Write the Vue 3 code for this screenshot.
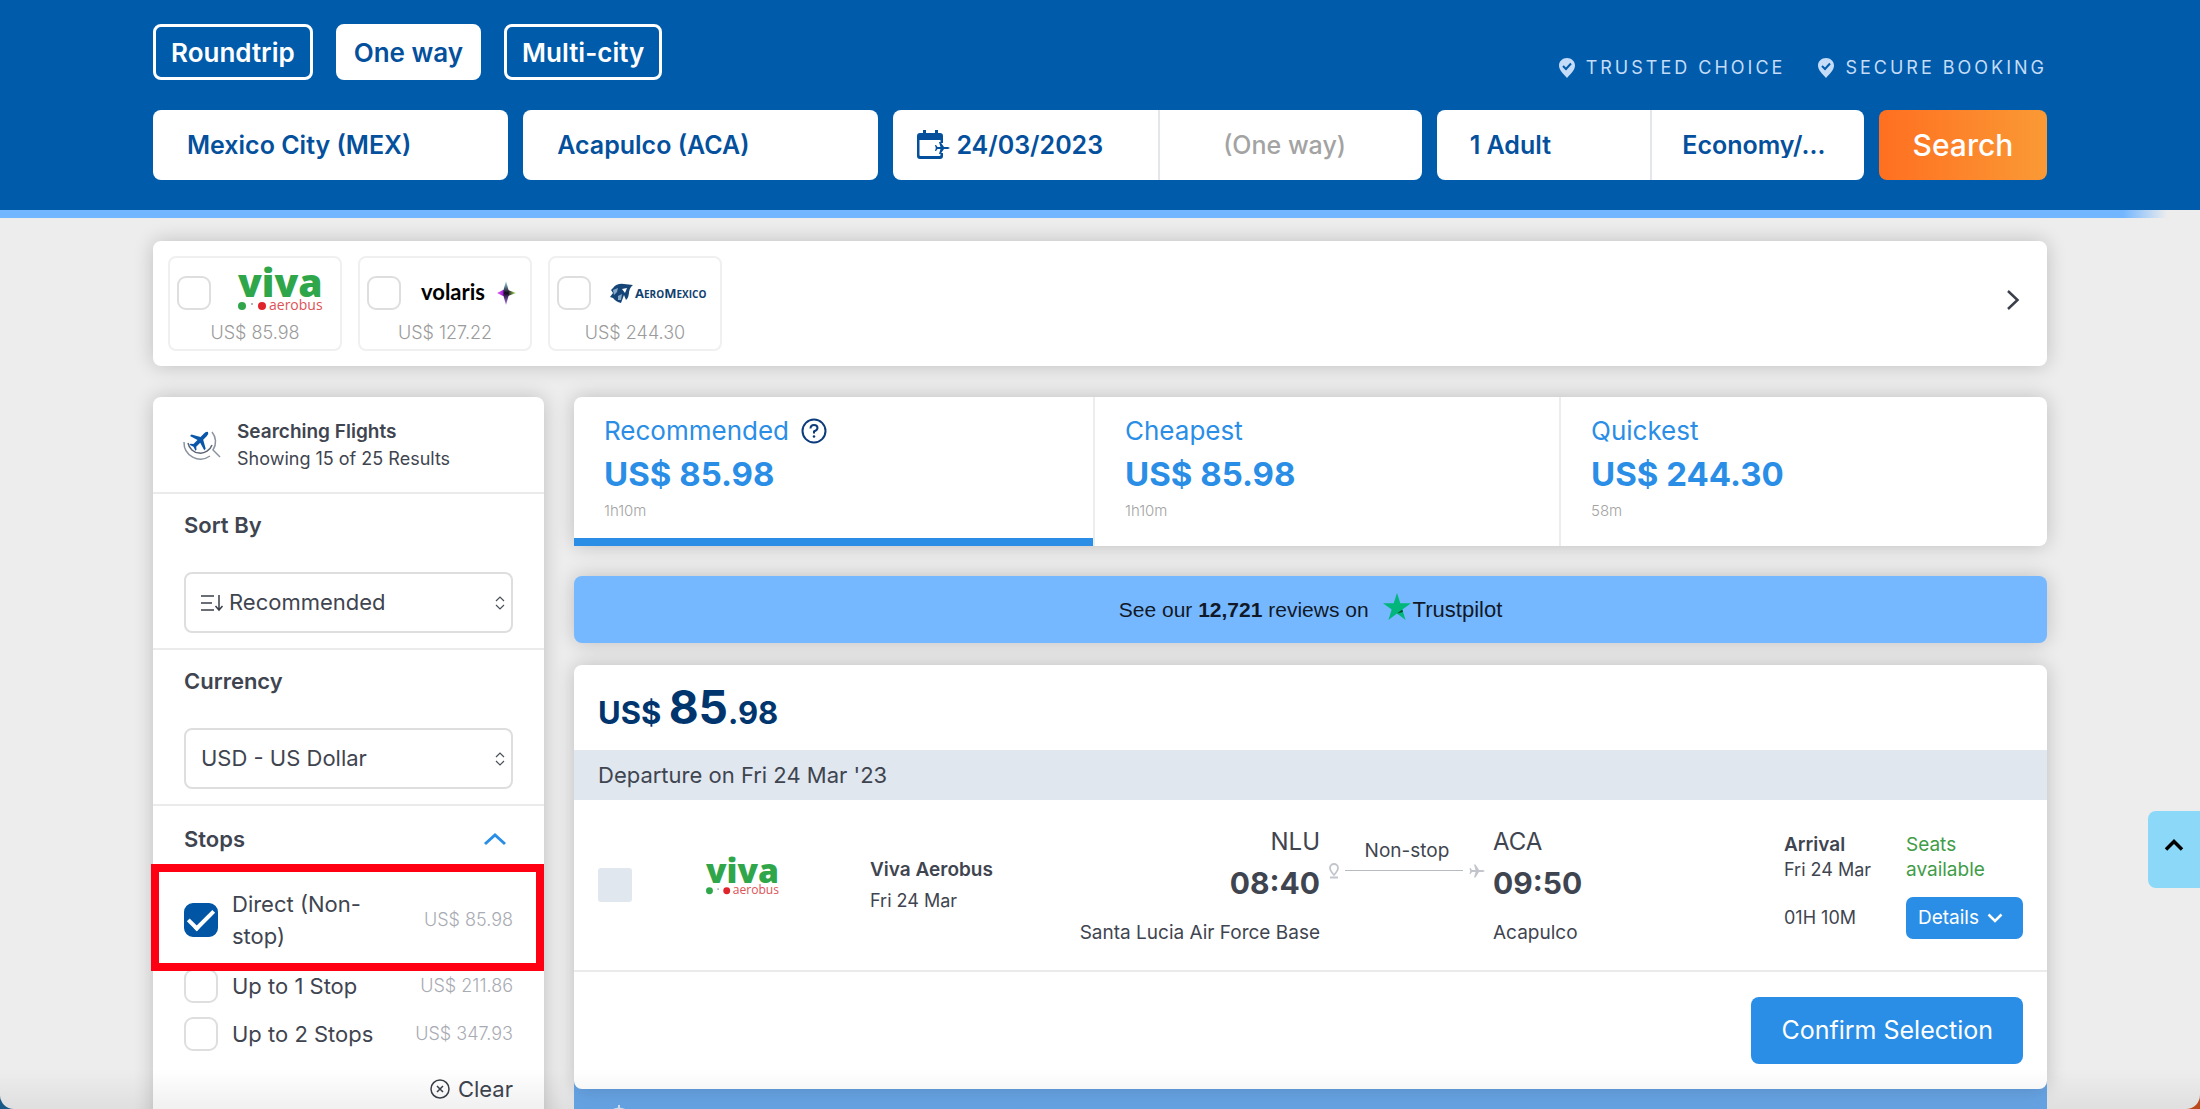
<script setup>
import { ref } from 'vue'

const tripTypes = ['Roundtrip', 'One way', 'Multi-city']
const trip = ref('One way')
const origin = ref('Mexico City (MEX)')
const destination = ref('Acapulco (ACA)')
const departDate = ref('24/03/2023')

const perks = ['TRUSTED CHOICE', 'SECURE BOOKING']

const airlines = [
  { id: 'viva',       price: 'US$ 85.98' },
  { id: 'volaris',    price: 'US$ 127.22' },
  { id: 'aeromexico', price: 'US$ 244.30' },
]

const stops = ref([
  { id: 'direct', label: 'Direct (Non-stop)', price: 'US$ 85.98',  checked: true },
  { id: 'one',    label: 'Up to 1 Stop',      price: 'US$ 211.86', checked: false },
  { id: 'two',    label: 'Up to 2 Stops',     price: 'US$ 347.93', checked: false },
])

const tabs = [
  { label: 'Recommended', price: 'US$ 85.98',  time: '1h10m', help: true },
  { label: 'Cheapest',    price: 'US$ 85.98',  time: '1h10m' },
  { label: 'Quickest',    price: 'US$ 244.30', time: '58m' },
]
const activeTab = ref('Recommended')

function clearStops() {
  stops.value.forEach(s => { s.checked = false })
}
</script>

<template>
  <div class="page">
    <header class="top">
      <div class="top-row">
        <div class="trips">
          <button v-for="t in tripTypes" :key="t" type="button" :class="['trip', { active: t === trip }]" @click="trip = t">{{ t }}</button>
        </div>
        <div class="perks">
          <span v-for="p in perks" :key="p" class="perk">
            <svg width="16" height="20" viewBox="0 0 16 20">
              <path d="M8 0 C12.5 0 16 3.3 16 7.6 C16 12 12 15.5 8 20 C4 15.5 0 12 0 7.6 C0 3.3 3.5 0 8 0 Z" fill="#c4dcf8"/>
              <path d="M4 8 L7 11 L12 5.5" fill="none" stroke="#005baa" stroke-width="2"/>
            </svg>
            {{ p }}
          </span>
        </div>
      </div>

      <form class="search" @submit.prevent>
        <input v-model="origin" class="field" aria-label="From">
        <input v-model="destination" class="field" aria-label="To">
        <div class="pair">
          <label class="half date">
            <svg width="33" height="30" viewBox="0 0 33 30">
              <path d="M6 0 h3 v3 h9 v-3 h3 v3 h2 a3 3 0 0 1 3 3 v7 h-2.500 v-3 h-21 v15 a1 1 0 0 0 1 1 h19 a1 1 0 0 0 1 -1 v-2 h2.500 v3 a3 3 0 0 1 -3 3 h-20 a3 3 0 0 1 -3 -3 v-20 a3 3 0 0 1 3 -3 h3 z" fill="#04509c"/>
              <path d="M33 18 l-2 1 h-4 l-3.500 5 h-1.500 l1.500 -5 h-3 l-1.500 2 h-1 l.8 -3 l-.8 -3 h1 l1.500 2 h3 l-1.500 -5 h1.500 l3.500 5 h4 z" fill="#04509c"/>
            </svg>
            <input v-model="departDate" aria-label="Departure date">
          </label>
          <input class="half return" placeholder="(One way)" aria-label="Return date" disabled>
        </div>
        <div class="pair">
          <select class="half" aria-label="Passengers"><option>1 Adult</option></select>
          <select class="half" aria-label="Cabin"><option>Economy/...</option></select>
        </div>
        <button class="go">Search</button>
      </form>
    </header>
    <div class="progress"></div>

    <main class="wrap">
      <section class="card airlines">
        <div v-for="a in airlines" :key="a.id" class="airline">
          <div class="airline-top">
            <input :id="a.id" type="checkbox" class="check" :aria-label="a.id">
            <label :for="a.id">
              <svg v-if="a.id === 'viva'" width="98" height="36" viewBox="-7 0 98 36">
                <text x="0" y="22" class="viva">viva</text>
                <circle cx="4" cy="31" r="4" fill="#2fa64a"/>
                <circle cx="14" cy="29" r="1" fill="#999"/>
                <circle cx="24" cy="31" r="4" fill="#e0242c"/>
                <text x="31" y="35" class="aerobus">aerobus</text>
              </svg>
              <svg v-else-if="a.id === 'volaris'" width="98" height="36" viewBox="0 0 98 36">
                <defs>
                  <linearGradient id="spark" x1="0" y1="0" x2="1" y2="0">
                    <stop offset="0" stop-color="#e06bf0"/>
                    <stop offset=".35" stop-color="#a01bd8"/>
                    <stop offset=".55" stop-color="#10081c"/>
                    <stop offset="1" stop-color="#b6f06c"/>
                  </linearGradient>
                  <linearGradient id="spark2" x1="0" y1="0" x2="0" y2="1">
                    <stop offset="0" stop-color="#a8e8f8"/>
                    <stop offset=".5" stop-color="#10081c"/>
                    <stop offset="1" stop-color="#b47cf8"/>
                  </linearGradient>
                </defs>
                <text x="0" y="25" class="volaris">volaris</text>
                <path d="M76 18 L82 15 L87 15 L95 18 L87 21 L82 21 Z" fill="url(#spark)"/>
                <path d="M85 6 L87.500 15 L87.500 21 L85 30 L82.500 21 L82.500 15 Z" fill="url(#spark2)"/>
              </svg>
              <svg v-else width="98" height="36" viewBox="0 0 98 36">
                <path d="M2 13 Q6 8 13 9 L22 10 Q19 12 18 17 Q18 22 15 25 L13 20 L10 28 Q5 27 2 23 L-1 22 L2 18 L0 15 Z" fill="#154577"/>
                <path d="M2 15 L7 13 L6 17 L3 20 Z M7 21 L11 19 L10 25 L7 25 Z" fill="#86a9c9"/>
                <path d="M11 14 L16 13 L14 18 Z" fill="#fff"/>
                <text x="24" y="23" class="aeromexico"><tspan class="cap">A</tspan>ERO<tspan class="cap">M</tspan>EXICO</text>
              </svg>
            </label>
          </div>
          <div class="airline-price">{{ a.price }}</div>
        </div>
        <button type="button" class="next" aria-label="Next">
          <svg width="14" height="22" viewBox="0 0 14 22"><path d="M2 2 L11.500 11 L2 20" fill="none" stroke="#3a3f4a" stroke-width="2.500"/></svg>
        </button>
      </section>

      <div class="columns">
        <aside class="card filters">
          <div class="status">
            <svg width="38" height="30" viewBox="0 0 38 30">
              <path d="M29 2 A15 15 0 0 1 30 20 L37 27 M1 12 A16.500 16.500 0 0 0 27 26" fill="none" stroke="#8b93a0" stroke-width="1.500"/>
              <path d="M5 13 A12.500 12.500 0 0 0 29 15" fill="none" stroke="#5c6674" stroke-width="1.500"/>
              <path d="M25 2 q-2 -1 -4 1.500 l-3.500 3.500 l-9 -2.500 l-1.500 1.500 l7.500 4 l-4 4 l-3 -.3 l-1 1 l4 2 l2 4 l1 -1 l-.3 -3 l4 -4 l4 7.500 l1.500 -1.500 l-2.500 -9 l3.500 -3.500 q2.500 -2 1.300 -4 z" fill="#0a56a8"/>
            </svg>
            <div>
              <b>Searching Flights</b>
              <p>Showing 15 of 25 Results</p>
            </div>
          </div>

          <div class="group">
            <label for="sort" class="group-title">Sort By</label>
            <div class="select-box">
              <svg width="22" height="18" viewBox="0 0 22 18">
                <path d="M0 2 H13 M0 9 H11 M0 16 H13 M18 1 V16 M14.500 12 L18 16 L21.500 12" fill="none" stroke="#3a3f4a" stroke-width="1.500"/>
              </svg>
              <select id="sort"><option>Recommended</option></select>
              <svg width="10" height="14" viewBox="0 0 10 14"><path d="M1 5 L5 1 L9 5 M1 9 L5 13 L9 9" fill="none" stroke="#4a5059" stroke-width="1.200"/></svg>
            </div>
          </div>

          <div class="group">
            <label for="currency" class="group-title">Currency</label>
            <div class="select-box">
              <select id="currency"><option>USD - US Dollar</option></select>
              <svg width="10" height="14" viewBox="0 0 10 14"><path d="M1 5 L5 1 L9 5 M1 9 L5 13 L9 9" fill="none" stroke="#4a5059" stroke-width="1.200"/></svg>
            </div>
          </div>

          <div class="stops-head">
            <span class="group-title">Stops</span>
            <button type="button" class="fold" aria-label="Collapse stops">
              <svg width="24" height="14" viewBox="0 0 24 14"><path d="M2 12 L12 3 L22 12" fill="none" stroke="#2a8ee6" stroke-width="3"/></svg>
            </button>
          </div>
          <div class="stops">
            <div v-for="s in stops" :key="s.id" :class="['stop', { marked: s.id === 'direct' }]">
              <input :id="s.id" v-model="s.checked" type="checkbox" class="check">
              <label :for="s.id">{{ s.label }}</label>
              <span class="stop-price">{{ s.price }}</span>
            </div>
          </div>
          <button type="button" class="clear" @click="clearStops">
            <svg width="20" height="20" viewBox="0 0 20 20"><circle cx="10" cy="10" r="9" fill="none" stroke="#3a3f4a" stroke-width="1.500"/><path d="M7 7 L13 13 M13 7 L7 13" stroke="#3a3f4a" stroke-width="1.500"/></svg>
            Clear
          </button>
        </aside>

        <div class="results">
          <section class="card tabs">
            <button v-for="t in tabs" :key="t.label" type="button" :class="['tab', { active: t.label === activeTab }]" @click="activeTab = t.label">
              <span class="tab-label">
                {{ t.label }}
                <svg v-if="t.help" width="26" height="26" viewBox="0 0 26 26">
                  <circle cx="13" cy="13" r="11.500" fill="none" stroke="#0d3c7c" stroke-width="2"/>
                  <path d="M9.500 10.500 Q9.500 7 13 7 Q16.500 7 16.500 10 Q16.500 12 13 13.500 V15.500" fill="none" stroke="#0d3c7c" stroke-width="2"/>
                  <circle cx="13" cy="18.500" r="1.300" fill="#0d3c7c"/>
                </svg>
              </span>
              <span class="tab-price">{{ t.price }}</span>
              <span class="tab-time">{{ t.time }}</span>
            </button>
          </section>

          <a href="#" class="card reviews">
            <span>See our <b>12,721</b> reviews on</span>
            <span class="pilot">
              <svg width="28" height="28" viewBox="0 0 28 28">
                <path d="M14 0 L17.300 10.300 H28 L19.300 16.600 L22.600 27 L14 20.600 L5.400 27 L8.700 16.600 L0 10.300 H10.700 Z" fill="#00b67a"/>
                <path d="M20 19 L19.300 16.600 L14 20.600 Z" fill="#005128"/>
              </svg>
              Trustpilot
            </span>
          </a>

          <article class="card offer">
            <div class="offer-price">US$ <strong>85</strong>.98</div>
            <div class="offer-date">Departure on Fri 24 Mar '23</div>
            <div class="flight">
              <input type="checkbox" class="pick" aria-label="Select flight" disabled>
              <svg class="carrier-logo" width="76" height="32" viewBox="0 0 88 37">
                <text x="0" y="22" class="viva">viva</text>
                <circle cx="4" cy="31" r="4" fill="#2fa64a"/>
                <circle cx="14" cy="29" r="1" fill="#999"/>
                <circle cx="24" cy="31" r="4" fill="#e0242c"/>
                <text x="31" y="35" class="aerobus">aerobus</text>
              </svg>
              <div class="carrier">
                <b>Viva Aerobus</b>
                <span>Fri 24 Mar</span>
              </div>
              <div class="place from">
                <span class="code">NLU</span>
                <b class="clock">08:40</b>
                <span class="airport">Santa Lucia Air Force Base</span>
              </div>
              <div class="leg">
                <span>Non-stop</span>
                <div class="leg-line">
                  <svg width="10" height="16" viewBox="0 0 10 16"><path d="M5 12 Q1 7.500 1 5 A4 4 0 0 1 9 5 Q9 7.500 5 12 Z M1 14.500 H9" fill="none" stroke="#c3c5cd" stroke-width="1.800"/></svg>
                  <i></i>
                  <svg width="16" height="14" viewBox="0 0 16 14"><path d="M16 7 L14 8 H10 L6.500 13.500 H5 L6.500 8 H3 L1.500 10 H.5 L1.200 7 L.5 4 H1.500 L3 6 H6.500 L5 .5 H6.500 L10 6 H14 Z" fill="#c3c5cd"/></svg>
                </div>
              </div>
              <div class="place">
                <span class="code">ACA</span>
                <b class="clock">09:50</b>
                <span class="airport">Acapulco</span>
              </div>
              <div class="arrival">
                <b>Arrival</b>
                <span>Fri 24 Mar</span>
                <span class="length">01H 10M</span>
              </div>
              <div class="seats">
                <span>Seats available</span>
                <button type="button" class="details">
                  Details
                  <svg width="16" height="10" viewBox="0 0 16 10"><path d="M1.500 1.500 L8 8 L14.500 1.500" fill="none" stroke="#fff" stroke-width="2.500"/></svg>
                </button>
              </div>
            </div>
            <div class="offer-foot">
              <button type="button" class="confirm">Confirm Selection</button>
            </div>
          </article>

          <div class="more">
            <svg width="26" height="26" viewBox="0 0 26 26"><path d="M13 0 V4 M4 7 Q13 0 22 7 V20 H4 Z" fill="none" stroke="#d6e9fd" stroke-width="2"/></svg>
          </div>
        </div>
      </div>
    </main>

    <button type="button" class="to-top" aria-label="Back to top">
      <svg width="20" height="14" viewBox="0 0 20 14"><path d="M2 11.500 L10 3.500 L18 11.500" fill="none" stroke="#000" stroke-width="3.500"/></svg>
    </button>
  </div>
</template>

<style>
body { background: linear-gradient(90deg, #1a5a88 50%, #b9491a 50%); }
</style>

<style scoped>
* { box-sizing: border-box; }

.page {
  position: relative;
  height: 100vh;
  overflow: hidden;
  background: #ededed;
  border-radius: 0 0 14px 14px;
  color: #3f4550;
  font-family: Inter, "Open Sans", sans-serif;
  font-size: 18px;
  line-height: 25px;
}
/* shade along the bottom edge of the window */
.page::after {
  content: "";
  position: absolute;
  inset: auto 0 0 0;
  height: 40px;
  background: linear-gradient(rgba(0, 0, 0, 0), rgba(0, 0, 0, 0.06));
  pointer-events: none;
}
button, input, select { font: inherit; color: inherit; margin: 0; }
button { cursor: pointer; border: 0; background: none; padding: 0; }
select { appearance: none; border: 0; background: none; padding: 0; }
svg { display: block; flex: none; overflow: visible; }
p { margin: 0; }
b { font-weight: 600; }

.top {
  background: #005baa;
  padding: 24px 153px 30px;
}
.top-row {
  display: flex;
  justify-content: space-between;
  align-items: flex-start;
}
.trips { display: flex; gap: 23px; }
.trip {
  height: 56px;
  padding: 0 15px;
  border: 3px solid #fff;
  border-radius: 8px;
  color: #fff;
  font-size: 26px;
  font-weight: 600;
}
.trip.active { background: #fff; color: #04509c; }

.perks { display: flex; gap: 33px; padding-top: 31px; }
.perk {
  display: flex;
  align-items: center;
  gap: 11px;
  color: #c4dcf8;
  font-size: 18px;
  letter-spacing: 3px;
}

.search {
  display: grid;
  grid-template-columns: 355fr 355fr 528fr 427fr 168fr;
  gap: 15px;
  margin-top: 30px;
}
.field, .pair, .go {
  height: 70px;
  min-width: 0;
  border: 0;
  border-radius: 8px;
  background: #fff;
  color: #04509c;
  font-size: 25px;
  font-weight: 600;
}
.field { padding: 0 34px; }
.pair { display: flex; }
.half {
  flex: 0 0 50%;
  min-width: 0;
  padding: 0 0 0 33px;
}
.half + .half { border: 0; border-left: 2px solid #e3e6ea; padding-left: 30px; }
.date { display: flex; align-items: center; gap: 6px; padding-left: 24px; }
.date input { width: 100%; min-width: 0; border: 0; padding: 0; background: none; }
.pair .return { padding: 0 12px 0 0; text-align: center; background: none; }
.return::placeholder { color: #a3a3a3; opacity: 1; font-weight: 500; }
.go {
  background: linear-gradient(90deg, #ff6f20, #fa9a35);
  color: #fff;
  font-size: 30px;
  font-weight: 500;
}

.progress {
  height: 8px;
  background: linear-gradient(90deg, #72b6ff 96.500%, #ededed 98.500%);
}

.wrap { padding: 23px 153px 0; }
.card {
  background: #fff;
  border-radius: 8px;
  box-shadow: 0 0 20px rgba(0, 0, 0, 0.2);
}

.airlines {
  display: flex;
  align-items: center;
  gap: 16px;
  height: 125px;
  padding: 0 27px 0 15px;
}
.airline {
  width: 174px;
  height: 95px;
  padding-top: 16px;
  border: 2px solid #f0f0f0;
  border-radius: 8px;
}
.airline-top { display: flex; align-items: center; gap: 20px; height: 38px; padding-left: 7px; }
.airline-price {
  margin-top: 8px;
  text-align: center;
  color: #9b9b9b;
  font-weight: 300;
}
.next { margin: 0 0 8px auto; }

.check {
  appearance: none;
  flex: none;
  width: 34px;
  height: 34px;
  border: 2px solid #dedede;
  border-radius: 9px;
  background: #fff;
}
.check:checked {
  border-color: #0055a5;
  background: #0055a5;
  display: grid;
  place-items: center;
}
.check:checked::after {
  content: "";
  width: 22px;
  height: 10px;
  border: solid #fff;
  border-width: 0 0 4px 4px;
  transform: translateY(-3px) rotate(-45deg);
}

.viva { font: 800 39px "Open Sans", sans-serif; fill: #2fa64a; }
.aerobus { font: 400 14px "Open Sans", sans-serif; fill: #dd5257; }
.volaris { font: 700 22px Lato, sans-serif; fill: #000; }
.aeromexico { font: 700 10px "Open Sans", sans-serif; fill: #123f70; }
.cap { font-size: 13px; }

.columns {
  display: grid;
  grid-template-columns: 391fr 1473fr;
  gap: 30px;
  margin-top: 31px;
  align-items: start;
}

.filters { padding-bottom: 60px; }
.status {
  display: flex;
  align-items: center;
  gap: 16px;
  height: 97px;
  padding-left: 30px;
  border-bottom: 2px solid #ebebeb;
}
.status div { line-height: 27px; }
.status b { font-size: 19px; }
.group {
  height: 156px;
  padding: 17px 31px 0;
  border-bottom: 2px solid #ebebeb;
}
.group-title {
  display: block;
  font-size: 22px;
  font-weight: 600;
  line-height: 28px;
}
.select-box {
  display: flex;
  align-items: center;
  gap: 6px;
  height: 61px;
  margin-top: 33px;
  padding: 0 6px 0 15px;
  border: 2px solid #dedede;
  border-radius: 8px;
  font-size: 22px;
}
.select-box select { flex: 1; min-width: 0; }
.stops-head {
  display: flex;
  justify-content: space-between;
  align-items: center;
  height: 64px;
  padding: 2px 37px 0 31px;
}
.stop {
  display: flex;
  align-items: center;
  height: 48px;
  padding: 0 31px;
  font-size: 22px;
  line-height: 32px;
}
.stop label { width: 160px; margin-left: 14px; }
.stop-price {
  margin-left: auto;
  color: #a9abb3;
  font-size: 18px;
  font-weight: 300;
  white-space: nowrap;
}
/* highlighted option */
.stop.marked {
  position: relative;
  height: 92px;
  padding-top: 8px;
}
.stop.marked::before {
  content: "";
  position: absolute;
  inset: -6px 0 -9px -2px;
  border: 8px solid #ff0012;
  pointer-events: none;
}
.clear {
  display: flex;
  align-items: center;
  gap: 8px;
  margin: 16px 31px 0 auto;
  font-size: 22px;
  line-height: 30px;
}

.tabs {
  display: grid;
  grid-template-columns: 519fr 466fr 488fr;
  height: 149px;
}
.tab {
  display: flex;
  flex-direction: column;
  align-items: flex-start;
  padding: 18px 30px 0;
  color: #2a8ee6;
}
.tab + .tab { border-left: 2px solid #ededed; }
.tab.active { border-bottom: 8px solid #2a8ee6; }
.tab-label { display: flex; gap: 12px; align-items: center; font-size: 26px; line-height: 32px; }
.tab-price { font-size: 33px; font-weight: 700; line-height: 54px; }
.tab-time { color: #a3a3a3; font-size: 15px; font-weight: 300; line-height: 20px; }

.reviews {
  display: flex;
  justify-content: center;
  align-items: center;
  gap: 14px;
  height: 67px;
  margin-top: 30px;
  background: #76b8ff;
  color: #111827;
  font-family: "Liberation Sans", Arial, sans-serif;
  font-size: 21px;
  text-decoration: none;
}
.reviews b { font-weight: 700; }
.pilot { display: flex; align-items: center; gap: 2px; font-size: 22px; }
.pilot svg { margin-bottom: 6px; }

.offer {
  position: relative;
  margin-top: 22px;
}
.offer-price {
  height: 85px;
  padding: 12px 24px 0;
  color: #00356e;
  font-size: 31px;
  font-weight: 700;
  line-height: 60px;
}
.offer-price strong { font-size: 46px; font-weight: 700; }
.offer-date {
  padding: 0 24px;
  background: #e0e7ef;
  font-size: 22px;
  line-height: 50px;
}
.flight {
  display: grid;
  grid-template-columns: 108fr 164fr 208fr 242fr 173fr 291fr 122fr 117fr;
  align-items: center;
  height: 172px;
  padding: 0 24px;
  border-bottom: 2px solid #ebebeb;
}
.flight b { font-size: 19px; }
.pick {
  appearance: none;
  width: 34px;
  height: 34px;
  border-radius: 3px;
  background: #e0e7ef;
}
.carrier-logo { margin-bottom: 10px; }
.carrier { display: grid; gap: 6px; }
.place { display: grid; white-space: nowrap; }
.from { justify-items: end; }
.code { font-size: 24px; line-height: 38px; }
.flight .clock { font-size: 30px; font-weight: 700; line-height: 44px; }
.airport { margin-top: 14px; font-size: 19px; line-height: 28px; }
.leg { display: grid; padding: 0 8px 0 9px; text-align: center; margin-bottom: 54px; font-size: 19px; }
.leg-line { display: flex; align-items: center; gap: 6px; }
.leg-line i { flex: 1; height: 1px; background: #b9bbc2; }
.arrival { display: grid; min-height: 107px; align-content: start; }
.length { margin-top: 23px; }
.seats { color: #3f9c47; font-size: 19px; }
.seats span { display: block; }
.details {
  display: flex;
  align-items: center;
  gap: 8px;
  width: 100%;
  height: 42px;
  margin-top: 15px;
  padding-left: 12px;
  border-radius: 7px;
  background: #2a8ee6;
  color: #fff;
}
.offer-foot {
  display: flex;
  justify-content: flex-end;
  padding: 25px 24px;
}
.confirm {
  height: 67px;
  padding: 0 30px;
  border-radius: 8px;
  background: #2a8ee6;
  color: #fff;
  font-size: 25px;
}
.more {
  height: 120px;
  margin-top: -8px;
  padding: 24px 32px;
  background: #6babee;
}

.to-top {
  position: absolute;
  right: 0;
  top: 811px;
  display: grid;
  place-items: center;
  width: 52px;
  height: 77px;
  padding-bottom: 10px;
  border-radius: 8px 0 0 8px;
  background: #8bd8f8;
}
</style>
